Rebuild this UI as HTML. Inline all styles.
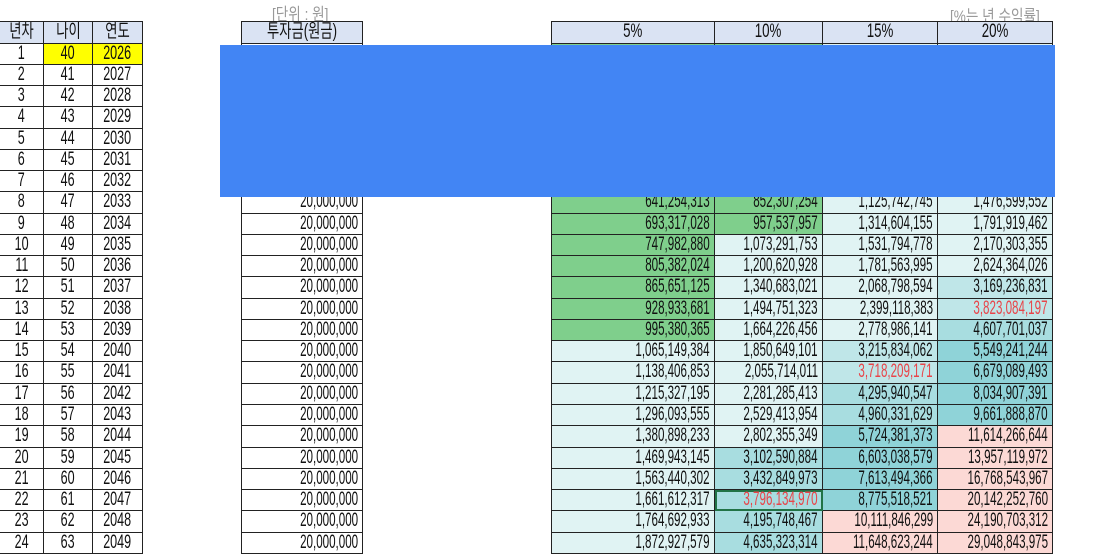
<!DOCTYPE html>
<html><head><meta charset="utf-8">
<style>
*{margin:0;padding:0;box-sizing:border-box}
body{width:1112px;height:556px;background:#fff;position:relative;overflow:hidden;font-family:"Liberation Sans","Noto Sans CJK KR",sans-serif;color:#111}
.g{position:absolute;display:grid;border-top:1px solid #222;border-left:1px solid #222;grid-template-rows:21.5px repeat(24,21.27px)}
.g>div{border-right:1px solid #222;border-bottom:1px solid #222;font-size:19px;line-height:20px;white-space:nowrap;overflow:hidden;position:relative;display:flex;justify-content:center}
.g span{flex-shrink:0;display:block}
.c span{transform:scaleX(.66)}
.h{background:#dae3f3}
.h span{transform:scaleX(.7)}
.g>.r{justify-content:flex-end;padding-right:4px}
.r span{transform:scaleX(.61);transform-origin:right center}
.G{background:#7fcf8c}.L{background:#e0f3f3}.M{background:#bfe6e8}.T{background:#a8dde0}.D{background:#8fd3d8}.P{background:#fcd9d5}
.red{color:#e8454a}
.y{background:#ffff00}
.cap{position:absolute;color:#999;font-size:17px;white-space:nowrap}
.cap span{display:inline-block;transform:scaleX(.8);transform-origin:left}
</style></head><body>
<div class="cap" style="left:272px;top:0px"><span>[단위 : 원]</span></div>
<div class="cap" style="left:950px;top:2px"><span>[%는 년 수익률]</span></div>

<div class="g" style="left:-1px;top:21px;grid-template-columns:44px 49px 50px">
<div class="h"><span>년차</span></div><div class="h"><span>나이</span></div><div class="h"><span>연도</span></div>
<div class="c"><span>1</span></div><div class="c y"><span>40</span></div><div class="c y"><span>2026</span></div>
<div class="c"><span>2</span></div><div class="c"><span>41</span></div><div class="c"><span>2027</span></div>
<div class="c"><span>3</span></div><div class="c"><span>42</span></div><div class="c"><span>2028</span></div>
<div class="c"><span>4</span></div><div class="c"><span>43</span></div><div class="c"><span>2029</span></div>
<div class="c"><span>5</span></div><div class="c"><span>44</span></div><div class="c"><span>2030</span></div>
<div class="c"><span>6</span></div><div class="c"><span>45</span></div><div class="c"><span>2031</span></div>
<div class="c"><span>7</span></div><div class="c"><span>46</span></div><div class="c"><span>2032</span></div>
<div class="c"><span>8</span></div><div class="c"><span>47</span></div><div class="c"><span>2033</span></div>
<div class="c"><span>9</span></div><div class="c"><span>48</span></div><div class="c"><span>2034</span></div>
<div class="c"><span>10</span></div><div class="c"><span>49</span></div><div class="c"><span>2035</span></div>
<div class="c"><span>11</span></div><div class="c"><span>50</span></div><div class="c"><span>2036</span></div>
<div class="c"><span>12</span></div><div class="c"><span>51</span></div><div class="c"><span>2037</span></div>
<div class="c"><span>13</span></div><div class="c"><span>52</span></div><div class="c"><span>2038</span></div>
<div class="c"><span>14</span></div><div class="c"><span>53</span></div><div class="c"><span>2039</span></div>
<div class="c"><span>15</span></div><div class="c"><span>54</span></div><div class="c"><span>2040</span></div>
<div class="c"><span>16</span></div><div class="c"><span>55</span></div><div class="c"><span>2041</span></div>
<div class="c"><span>17</span></div><div class="c"><span>56</span></div><div class="c"><span>2042</span></div>
<div class="c"><span>18</span></div><div class="c"><span>57</span></div><div class="c"><span>2043</span></div>
<div class="c"><span>19</span></div><div class="c"><span>58</span></div><div class="c"><span>2044</span></div>
<div class="c"><span>20</span></div><div class="c"><span>59</span></div><div class="c"><span>2045</span></div>
<div class="c"><span>21</span></div><div class="c"><span>60</span></div><div class="c"><span>2046</span></div>
<div class="c"><span>22</span></div><div class="c"><span>61</span></div><div class="c"><span>2047</span></div>
<div class="c"><span>23</span></div><div class="c"><span>62</span></div><div class="c"><span>2048</span></div>
<div class="c"><span>24</span></div><div class="c"><span>63</span></div><div class="c"><span>2049</span></div>
</div>

<div class="g" style="left:241px;top:21px;grid-template-columns:121px">
<div class="h"><span>투자금(원금)</span></div>
<div class="r"><span>20,000,000</span></div><div class="r"><span>20,000,000</span></div><div class="r"><span>20,000,000</span></div><div class="r"><span>20,000,000</span></div>
<div class="r"><span>20,000,000</span></div><div class="r"><span>20,000,000</span></div><div class="r"><span>20,000,000</span></div><div class="r"><span>20,000,000</span></div>
<div class="r"><span>20,000,000</span></div><div class="r"><span>20,000,000</span></div><div class="r"><span>20,000,000</span></div><div class="r"><span>20,000,000</span></div>
<div class="r"><span>20,000,000</span></div><div class="r"><span>20,000,000</span></div><div class="r"><span>20,000,000</span></div><div class="r"><span>20,000,000</span></div>
<div class="r"><span>20,000,000</span></div><div class="r"><span>20,000,000</span></div><div class="r"><span>20,000,000</span></div><div class="r"><span>20,000,000</span></div>
<div class="r"><span>20,000,000</span></div><div class="r"><span>20,000,000</span></div><div class="r"><span>20,000,000</span></div><div class="r"><span>20,000,000</span></div>
</div>

<div class="g" style="left:551px;top:21px;grid-template-columns:163px 108px 115px 115px">
<div class="h"><span>5%</span></div><div class="h"><span>10%</span></div><div class="h"><span>15%</span></div><div class="h"><span>20%</span></div>
<div class="r G"></div><div class="r G"></div><div class="r L"></div><div class="r L"></div>
<div class="r G"></div><div class="r G"></div><div class="r L"></div><div class="r L"></div>
<div class="r G"></div><div class="r G"></div><div class="r L"></div><div class="r L"></div>
<div class="r G"></div><div class="r G"></div><div class="r L"></div><div class="r L"></div>
<div class="r G"></div><div class="r G"></div><div class="r L"></div><div class="r L"></div>
<div class="r G"></div><div class="r G"></div><div class="r L"></div><div class="r L"></div>
<div class="r G"></div><div class="r G"></div><div class="r L"></div><div class="r L"></div>
<div class="r G"><span>641,254,313</span></div><div class="r G"><span>852,307,254</span></div><div class="r L"><span>1,125,742,745</span></div><div class="r L"><span>1,476,599,552</span></div>
<div class="r G"><span>693,317,028</span></div><div class="r G"><span>957,537,957</span></div><div class="r L"><span>1,314,604,155</span></div><div class="r L"><span>1,791,919,462</span></div>
<div class="r G"><span>747,982,880</span></div><div class="r L"><span>1,073,291,753</span></div><div class="r L"><span>1,531,794,778</span></div><div class="r L"><span>2,170,303,355</span></div>
<div class="r G"><span>805,382,024</span></div><div class="r L"><span>1,200,620,928</span></div><div class="r L"><span>1,781,563,995</span></div><div class="r L"><span>2,624,364,026</span></div>
<div class="r G"><span>865,651,125</span></div><div class="r L"><span>1,340,683,021</span></div><div class="r L"><span>2,068,798,594</span></div><div class="r M"><span>3,169,236,831</span></div>
<div class="r G"><span>928,933,681</span></div><div class="r L"><span>1,494,751,323</span></div><div class="r L"><span>2,399,118,383</span></div><div class="r M red"><span>3,823,084,197</span></div>
<div class="r G"><span>995,380,365</span></div><div class="r L"><span>1,664,226,456</span></div><div class="r L"><span>2,778,986,141</span></div><div class="r T"><span>4,607,701,037</span></div>
<div class="r L"><span>1,065,149,384</span></div><div class="r L"><span>1,850,649,101</span></div><div class="r M"><span>3,215,834,062</span></div><div class="r D"><span>5,549,241,244</span></div>
<div class="r L"><span>1,138,406,853</span></div><div class="r L"><span>2,055,714,011</span></div><div class="r M red"><span>3,718,209,171</span></div><div class="r D"><span>6,679,089,493</span></div>
<div class="r L"><span>1,215,327,195</span></div><div class="r L"><span>2,281,285,413</span></div><div class="r T"><span>4,295,940,547</span></div><div class="r D"><span>8,034,907,391</span></div>
<div class="r L"><span>1,296,093,555</span></div><div class="r L"><span>2,529,413,954</span></div><div class="r T"><span>4,960,331,629</span></div><div class="r D"><span>9,661,888,870</span></div>
<div class="r L"><span>1,380,898,233</span></div><div class="r L"><span>2,802,355,349</span></div><div class="r D"><span>5,724,381,373</span></div><div class="r P"><span>11,614,266,644</span></div>
<div class="r L"><span>1,469,943,145</span></div><div class="r T"><span>3,102,590,884</span></div><div class="r D"><span>6,603,038,579</span></div><div class="r P"><span>13,957,119,972</span></div>
<div class="r L"><span>1,563,440,302</span></div><div class="r T"><span>3,432,849,973</span></div><div class="r D"><span>7,613,494,366</span></div><div class="r P"><span>16,768,543,967</span></div>
<div class="r L"><span>1,661,612,317</span></div><div class="r T red" style="outline:2px solid #217346;outline-offset:-2px"><span>3,796,134,970</span></div><div class="r D"><span>8,775,518,521</span></div><div class="r P"><span>20,142,252,760</span></div>
<div class="r L"><span>1,764,692,933</span></div><div class="r T"><span>4,195,748,467</span></div><div class="r P"><span>10,111,846,299</span></div><div class="r P"><span>24,190,703,312</span></div>
<div class="r L"><span>1,872,927,579</span></div><div class="r T"><span>4,635,323,314</span></div><div class="r P"><span>11,648,623,244</span></div><div class="r P"><span>29,048,843,975</span></div>
</div>

<div style="position:absolute;left:220px;top:45px;width:835px;height:152px;background:#4285f4"></div>
</body></html>
